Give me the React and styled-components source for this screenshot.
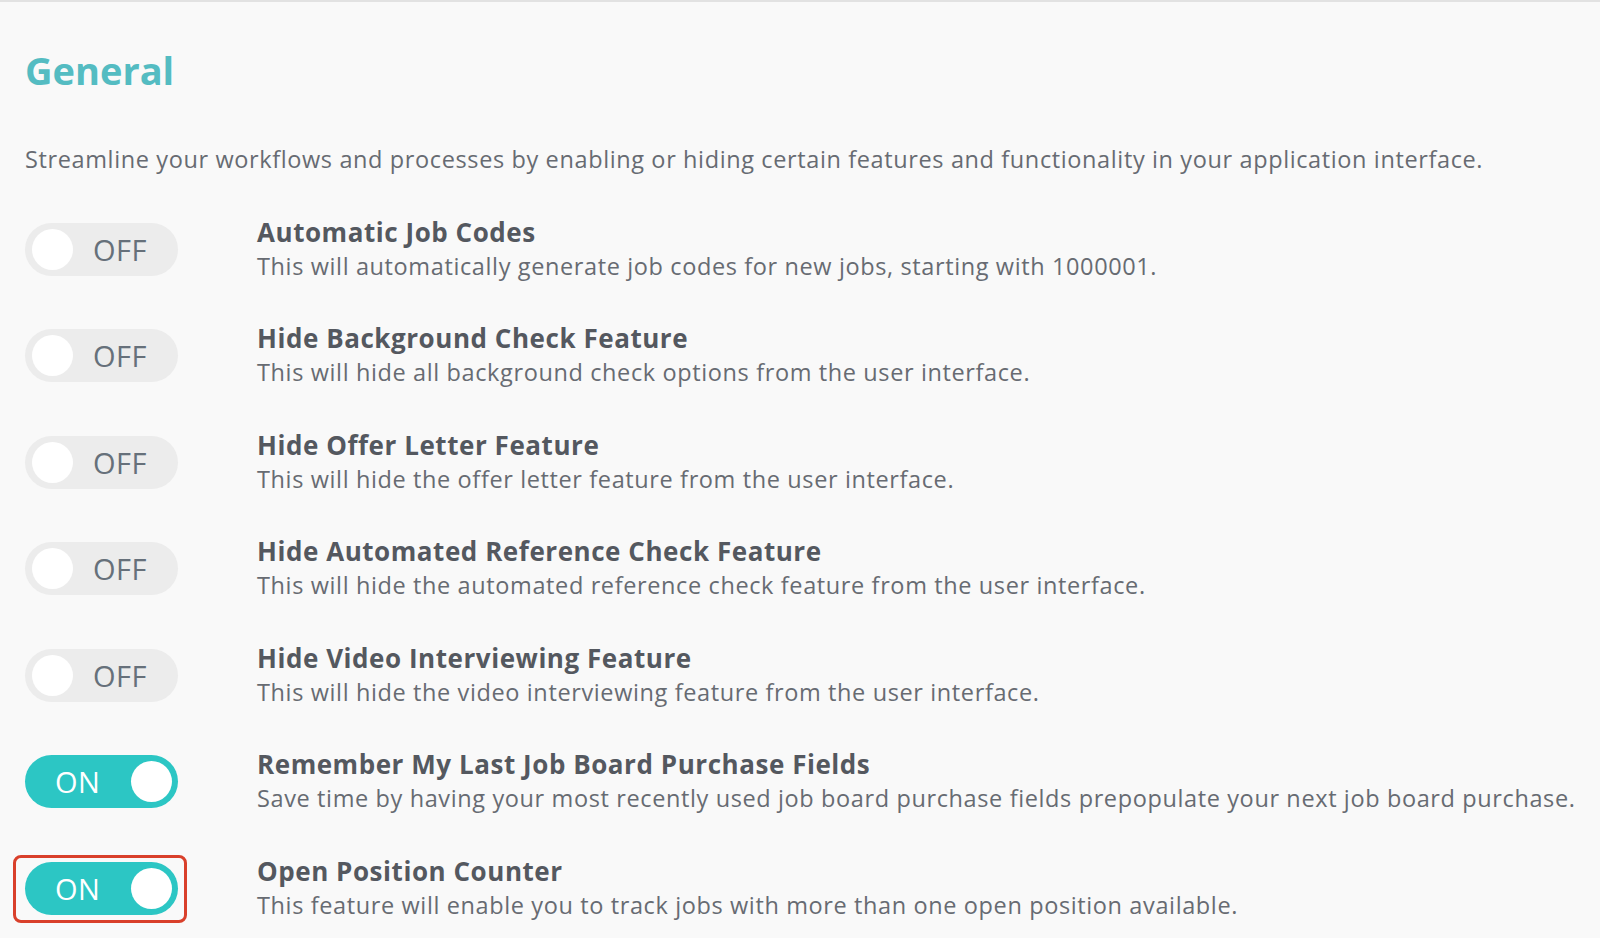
import React from 'react';
import styled, { createGlobalStyle } from 'styled-components';

const COLORS = {
  page: '#f9f9f9',
  teal: '#54bcc2',
  toggleOn: '#2cc6c4',
  toggleOff: '#ececec',
  title: '#54585f',
  text: '#676b72',
  highlight: '#d9402b',
};

const GlobalStyle = createGlobalStyle`
  html, body {
    margin: 0;
    padding: 0;
    background: ${COLORS.page};
    font-family: "Open Sans", Lato, sans-serif;
  }
`;

const SETTINGS = [
  {
    title: 'Automatic Job Codes',
    text: 'This will automatically generate job codes for new jobs, starting with 1000001.',
    on: false,
  },
  {
    title: 'Hide Background Check Feature',
    text: 'This will hide all background check options from the user interface.',
    on: false,
  },
  {
    title: 'Hide Offer Letter Feature',
    text: 'This will hide the offer letter feature from the user interface.',
    on: false,
  },
  {
    title: 'Hide Automated Reference Check Feature',
    text: 'This will hide the automated reference check feature from the user interface.',
    on: false,
  },
  {
    title: 'Hide Video Interviewing Feature',
    text: 'This will hide the video interviewing feature from the user interface.',
    on: false,
  },
  {
    title: 'Remember My Last Job Board Purchase Fields',
    text: 'Save time by having your most recently used job board purchase fields prepopulate your next job board purchase.',
    on: true,
  },
  {
    title: 'Open Position Counter',
    text: 'This feature will enable you to track jobs with more than one open position available.',
    on: true,
    highlighted: true,
  },
];

const Toggle = ({ on, onClick }) => (
  <Switch type="button" $on={on} onClick={onClick}>
    <SwitchLabel $on={on}>{on ? 'ON' : 'OFF'}</SwitchLabel>
    <Knob />
  </Switch>
);

const App = () => {
  const [settings, setSettings] = React.useState(SETTINGS);

  const flip = (index) => {
    setSettings((prev) =>
      prev.map((s, i) => (i === index ? { ...s, on: !s.on } : s))
    );
  };

  return (
    <Page>
      <GlobalStyle />
      <Heading>General</Heading>
      <Intro>
        Streamline your workflows and processes by enabling or hiding certain
        features and functionality in your application interface.
      </Intro>
      <List>
        {settings.map((s, i) => (
          <Row key={s.title}>
            <ToggleCell>
              <Toggle on={s.on} onClick={() => flip(i)} />
              {s.highlighted && <Highlight />}
            </ToggleCell>
            <Copy>
              <Title>{s.title}</Title>
              <Description>{s.text}</Description>
            </Copy>
          </Row>
        ))}
      </List>
    </Page>
  );
};

const Page = styled.main`
  min-height: 100vh;
  box-sizing: border-box;
  border-top: 2px solid #e2e2e2;
  padding: 46px 0 0 25px;
`;

const Heading = styled.h1`
  margin: 0;
  font-size: 38px;
  line-height: 44px;
  font-weight: 700;
  color: ${COLORS.teal};
`;

const Intro = styled.p`
  margin: 52px 0 0;
  font-size: 23.5px;
  line-height: 30px;
  letter-spacing: 0.62px;
  color: ${COLORS.text};
`;

const List = styled.div`
  display: flex;
  flex-direction: column;
  margin-top: 22px;
`;

const Row = styled.div`
  display: grid;
  grid-template-columns: 153px 1fr;
  column-gap: 79px;
  align-items: center;
  height: 106.5px;
`;

const ToggleCell = styled.div`
  position: relative;
  width: 153px;
  height: 53px;
`;

const Switch = styled.button`
  display: flex;
  align-items: center;
  flex-direction: ${(p) => (p.$on ? 'row' : 'row-reverse')};
  justify-content: space-between;
  box-sizing: border-box;
  width: 153px;
  height: 53px;
  padding-left: ${(p) => (p.$on ? '30px' : '7px')};
  padding-right: ${(p) => (p.$on ? '6px' : '31px')};
  border: none;
  border-radius: 27px;
  background: ${(p) => (p.$on ? COLORS.toggleOn : COLORS.toggleOff)};
  cursor: pointer;
`;

const SwitchLabel = styled.span`
  font-family: "Open Sans", sans-serif;
  font-size: 29px;
  font-weight: 400;
  letter-spacing: 0.5px;
  color: ${(p) => (p.$on ? '#ffffff' : '#66707a')};
`;

const Knob = styled.span`
  width: 41px;
  height: 41px;
  border-radius: 50%;
  background: #ffffff;
`;

const Highlight = styled.span`
  position: absolute;
  top: -7px;
  bottom: -8px;
  left: -12px;
  right: -9px;
  border: 3px solid ${COLORS.highlight};
  border-radius: 8px;
  pointer-events: none;
`;

const Copy = styled.div`
  display: flex;
  flex-direction: column;
`;

const Title = styled.div`
  font-size: 26px;
  line-height: 32px;
  margin-bottom: 2px;
  font-weight: 700;
  letter-spacing: 0.55px;
  color: ${COLORS.title};
`;

const Description = styled.div`
  font-size: 23.5px;
  line-height: 33px;
  letter-spacing: 0.62px;
  color: ${COLORS.text};
`;

export default App;
